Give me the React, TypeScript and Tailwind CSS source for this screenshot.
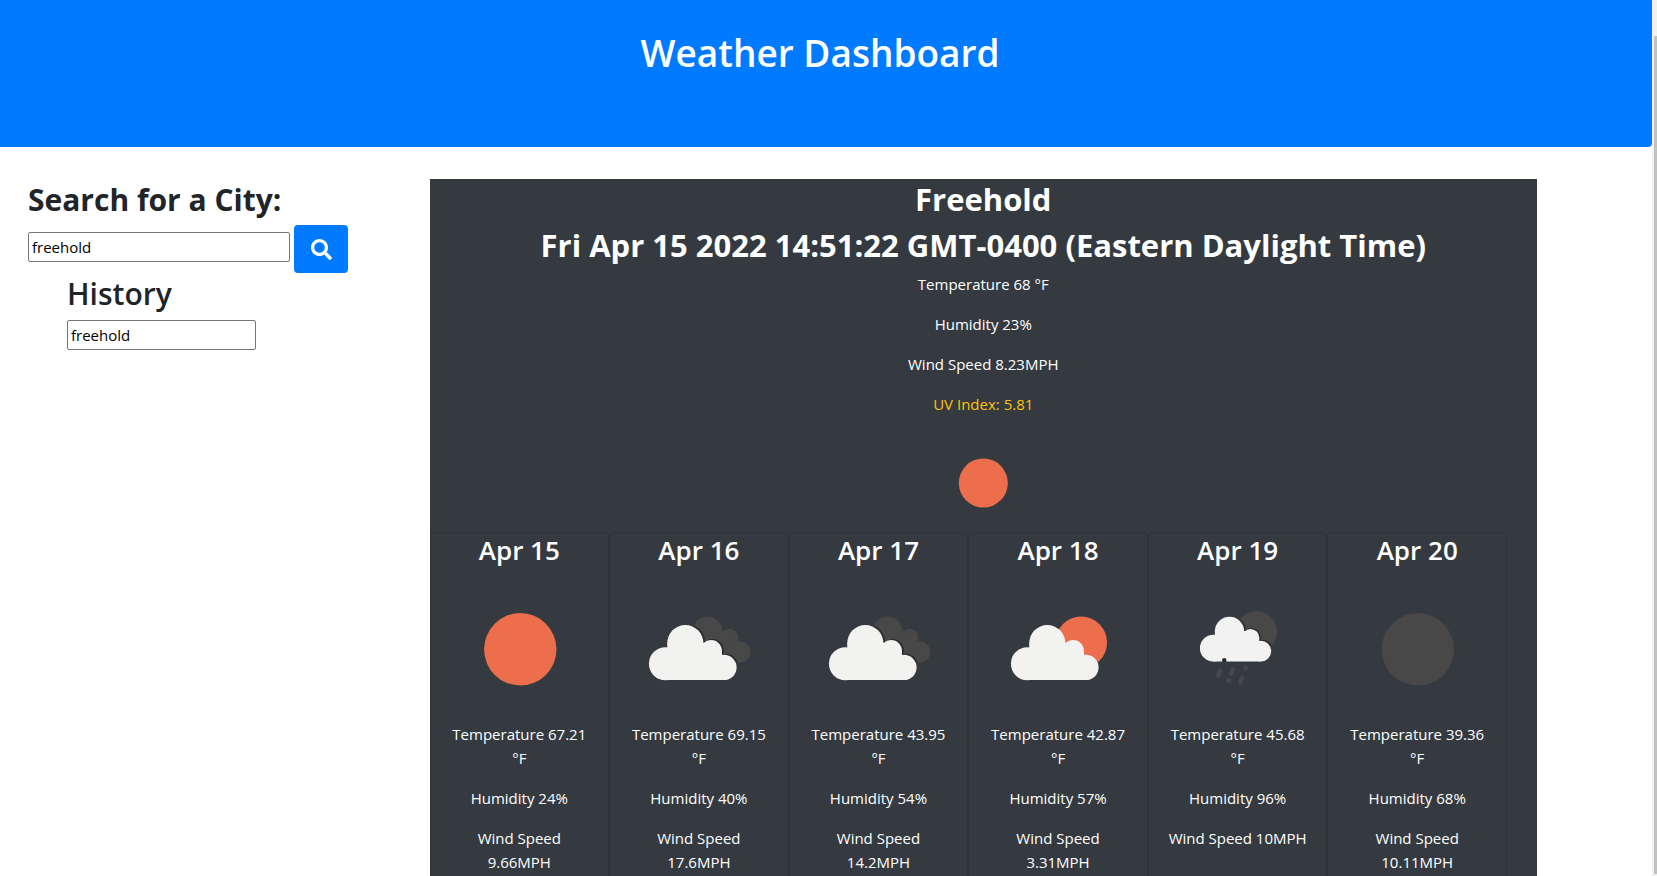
import { useId, type ReactNode } from "react";
import { FaSearch } from "react-icons/fa";

type Sky = "sun" | "moon" | "clouds" | "partly" | "rain";

interface Day {
  date: string;
  sky: Sky;
  temperature: string;
  humidity: string;
  wind: string;
}

const days: Day[] = [
  { date: "Apr 15", sky: "sun", temperature: "67.21", humidity: "24", wind: "9.66" },
  { date: "Apr 16", sky: "clouds", temperature: "69.15", humidity: "40", wind: "17.6" },
  { date: "Apr 17", sky: "clouds", temperature: "43.95", humidity: "54", wind: "14.2" },
  { date: "Apr 18", sky: "partly", temperature: "42.87", humidity: "57", wind: "3.31" },
  { date: "Apr 19", sky: "rain", temperature: "45.68", humidity: "96", wind: "10" },
  { date: "Apr 20", sky: "moon", temperature: "39.36", humidity: "68", wind: "10.11" },
];

function Cloud() {
  return (
    <>
      <circle cx="40.5" cy="89" r="16.5" />
      <circle cx="60.5" cy="68.3" r="18.1" />
      <circle cx="86.5" cy="76" r="10.7" />
      <circle cx="99.2" cy="92.7" r="12.7" />
      <path d="M42.5 68H86v8h11.2v12H99v17.4H40.5V88h2z" />
    </>
  );
}

function BackCloud() {
  return (
    <>
      <circle cx="82.8" cy="56" r="14.5" />
      <circle cx="104.8" cy="62.5" r="8.7" />
      <circle cx="115" cy="77.3" r="10.7" />
      <path d="M82 56h22l8 12-8 16H82z" />
    </>
  );
}

function WeatherIcon({ sky, className }: { sky: Sky; className: string }) {
  const clip = useId();
  let art: ReactNode = null;
  if (sky === "sun") art = <circle cx="74.5" cy="74.5" r="36.3" fill="#ec6e4c" />;
  if (sky === "moon") art = <circle cx="75" cy="74.5" r="36.3" fill="#484848" />;
  if (sky === "clouds") {
    art = (
      <>
        <clipPath id={clip}>
          <BackCloud />
        </clipPath>
        <g fill="#484848">
          <BackCloud />
        </g>
        <g clipPath={`url(#${clip})`}>
          <g fill="#2b2b2d" transform="translate(1.6 -1)">
            <Cloud />
          </g>
        </g>
        <g fill="#f2f2f0">
          <Cloud />
        </g>
      </>
    );
  }
  if (sky === "partly") {
    art = (
      <>
        <circle cx="97.4" cy="67.7" r="26" fill="#ec6e4c" />
        <g fill="#f2f2f0" transform="translate(3 0)">
          <Cloud />
        </g>
      </>
    );
  }
  if (sky === "rain") {
    art = (
      <>
        <clipPath id={clip}>
          <circle cx="92.7" cy="56.7" r="20.7" />
        </clipPath>
        <circle cx="92.7" cy="56.7" r="20.7" fill="#484848" />
        <g clipPath={`url(#${clip})`}>
          <g fill="#2b2b2d" transform="translate(18 0) scale(.813)">
            <Cloud />
          </g>
        </g>
        <g fill="#f2f2f3" transform="translate(16.5 1) scale(.813)">
          <Cloud />
        </g>
        <circle cx="60.4" cy="85.4" r="2.2" fill="#2b2b2d" />
        <g stroke="#484848" strokeWidth="4.6" strokeLinecap="round">
          <path d="M54.6 100.4l1.6-4.2M67.6 98.8l1.6-4.2M81.8 93.4l.3-.8M64.5 106.2l.3-.8M76.4 107.6l1.6-4" />
        </g>
      </>
    );
  }
  return (
    <svg viewBox="0 -1 148 148" className={className} aria-hidden="true">
      {art}
    </svg>
  );
}

function DayCard({ day }: { day: Day }) {
  return (
    <article className="flex flex-col rounded border border-[#2e3338] px-[15px] pb-4">
      <h3 className="mb-[7px] text-[26px] leading-[34px] font-semibold">{day.date}</h3>
      <WeatherIcon sky={day.sky} className="w-full" />
      <p className="mb-4">Temperature {day.temperature} °F</p>
      <p className="mb-4">Humidity {day.humidity}%</p>
      <p className="mb-4">Wind Speed {day.wind}MPH</p>
    </article>
  );
}

export default function App() {
  return (
    <div className="min-h-screen bg-white pr-[5px] font-['Open_Sans','Noto_Sans',sans-serif] text-[15px] leading-6 text-[#212529]">
      <header className="rounded-br bg-[#007bff] pt-[29px] pr-3 pb-[70px] text-center text-white">
        <h1 className="text-[37px] leading-[48px] font-semibold">Weather Dashboard</h1>
      </header>

      <div className="flex items-start pt-8">
        <aside className="w-[26%] shrink-0 pt-[2px] pl-7">
          <form onSubmit={(event) => event.preventDefault()}>
            <label htmlFor="city" className="mb-[6px] block text-[30px] leading-[38px] font-bold">
              Search for a City:
            </label>
            <div className="flex items-center gap-1">
              <input
                id="city"
                type="text"
                defaultValue="freehold"
                className="mb-1 h-[30px] w-[262px] rounded-xs border border-[#767676] bg-white px-[3px] text-black"
              />
              <button
                type="submit"
                aria-label="Search"
                className="flex h-12 w-[54px] items-center justify-center rounded bg-[#007bff] text-white"
              >
                <FaSearch className="size-[21px]" />
              </button>
            </div>
          </form>
          <section className="pl-[39px]">
            <h2 id="history" className="mt-[2px] mb-[7px] text-[30px] leading-[38px] font-semibold">
              History
            </h2>
            <input
              type="text"
              aria-labelledby="history"
              defaultValue="freehold"
              className="h-[30px] w-[189px] rounded-xs border border-[#767676] bg-white px-[3px] text-black"
            />
          </section>
        </aside>

        <main className="mr-[115px] min-w-0 flex-1 bg-[#343a40] text-center text-white">
          <section className="flex flex-col items-center pt-[1px]">
            <h2 className="mb-2 text-[31px] leading-[38px] font-bold">Freehold</h2>
            <h2 className="mb-2 text-[31px] leading-[38px] font-bold">
              Fri Apr 15 2022 14:51:22 GMT-0400 (Eastern Daylight Time)
            </h2>
            <p className="mb-4">Temperature 68 °F</p>
            <p className="mb-4">Humidity 23%</p>
            <p className="mb-4">Wind Speed 8.23MPH</p>
            <p className="mb-4 text-[#ffc107]">UV Index: 5.81</p>
            <WeatherIcon sky="sun" className="size-[100px]" />
          </section>
          <section className="mr-[30px] grid grid-cols-6">
            {days.map((day) => (
              <DayCard key={day.date} day={day} />
            ))}
          </section>
        </main>
      </div>

      <div aria-hidden="true" className="fixed inset-y-0 right-0 flex w-[5px] bg-[#f1f1f1] pt-9 pb-[2px] pl-[2px]">
        <div className="flex-1 bg-[#c1c1c1]" />
      </div>
    </div>
  );
}
